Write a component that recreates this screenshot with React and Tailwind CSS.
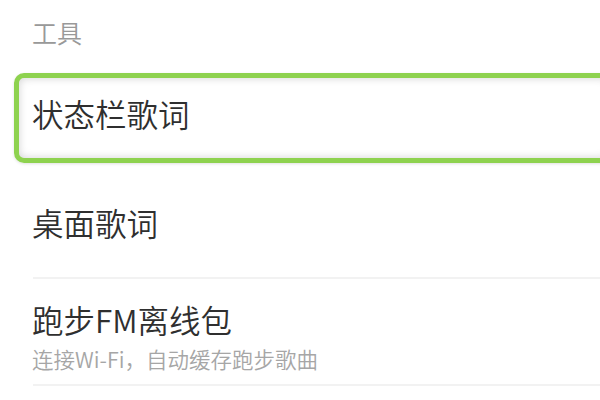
export default function App() {
  const font = { fontFamily: '"Noto Sans CJK SC", "Noto Sans", sans-serif' };
  return (
    <div className="w-[600px] h-[400px] bg-white overflow-hidden font-[350]" style={font}>
      <div className="h-[70px] flex items-center pl-[32px] pb-[6px] text-[25px] text-[#999] leading-none">
        工具
      </div>
      <div className="mt-[3px] ml-[14px] w-[600px] h-[90px] border-[5px] border-[#8ed24f] rounded-[10px] shadow-[inset_0_0_8px_rgba(0,0,0,0.18),0_1px_3px_rgba(0,0,0,0.12)] flex items-center pl-[13px] pb-[8px] text-[31.5px] text-[#2f2f2f] leading-none">
        状态栏歌词
      </div>
      <div className="h-[114px] flex items-center pl-[32px] pt-[6px] text-[31.5px] text-[#2f2f2f] leading-none">
        桌面歌词
      </div>
      <div className="ml-[33px] h-[2px] bg-[#f2f2f2]" />
      <div className="h-[105px] flex flex-col pl-[32px] pt-[25px]">
        <div className="text-[31.5px] text-[#2f2f2f] leading-none">跑步FM离线包</div>
        <div className="mt-[12px] text-[21.5px] text-[#a6a6a6] leading-none">连接Wi-Fi，自动缓存跑步歌曲</div>
      </div>
      <div className="ml-[33px] h-[2px] bg-[#f2f2f2]" />
    </div>
  );
}
